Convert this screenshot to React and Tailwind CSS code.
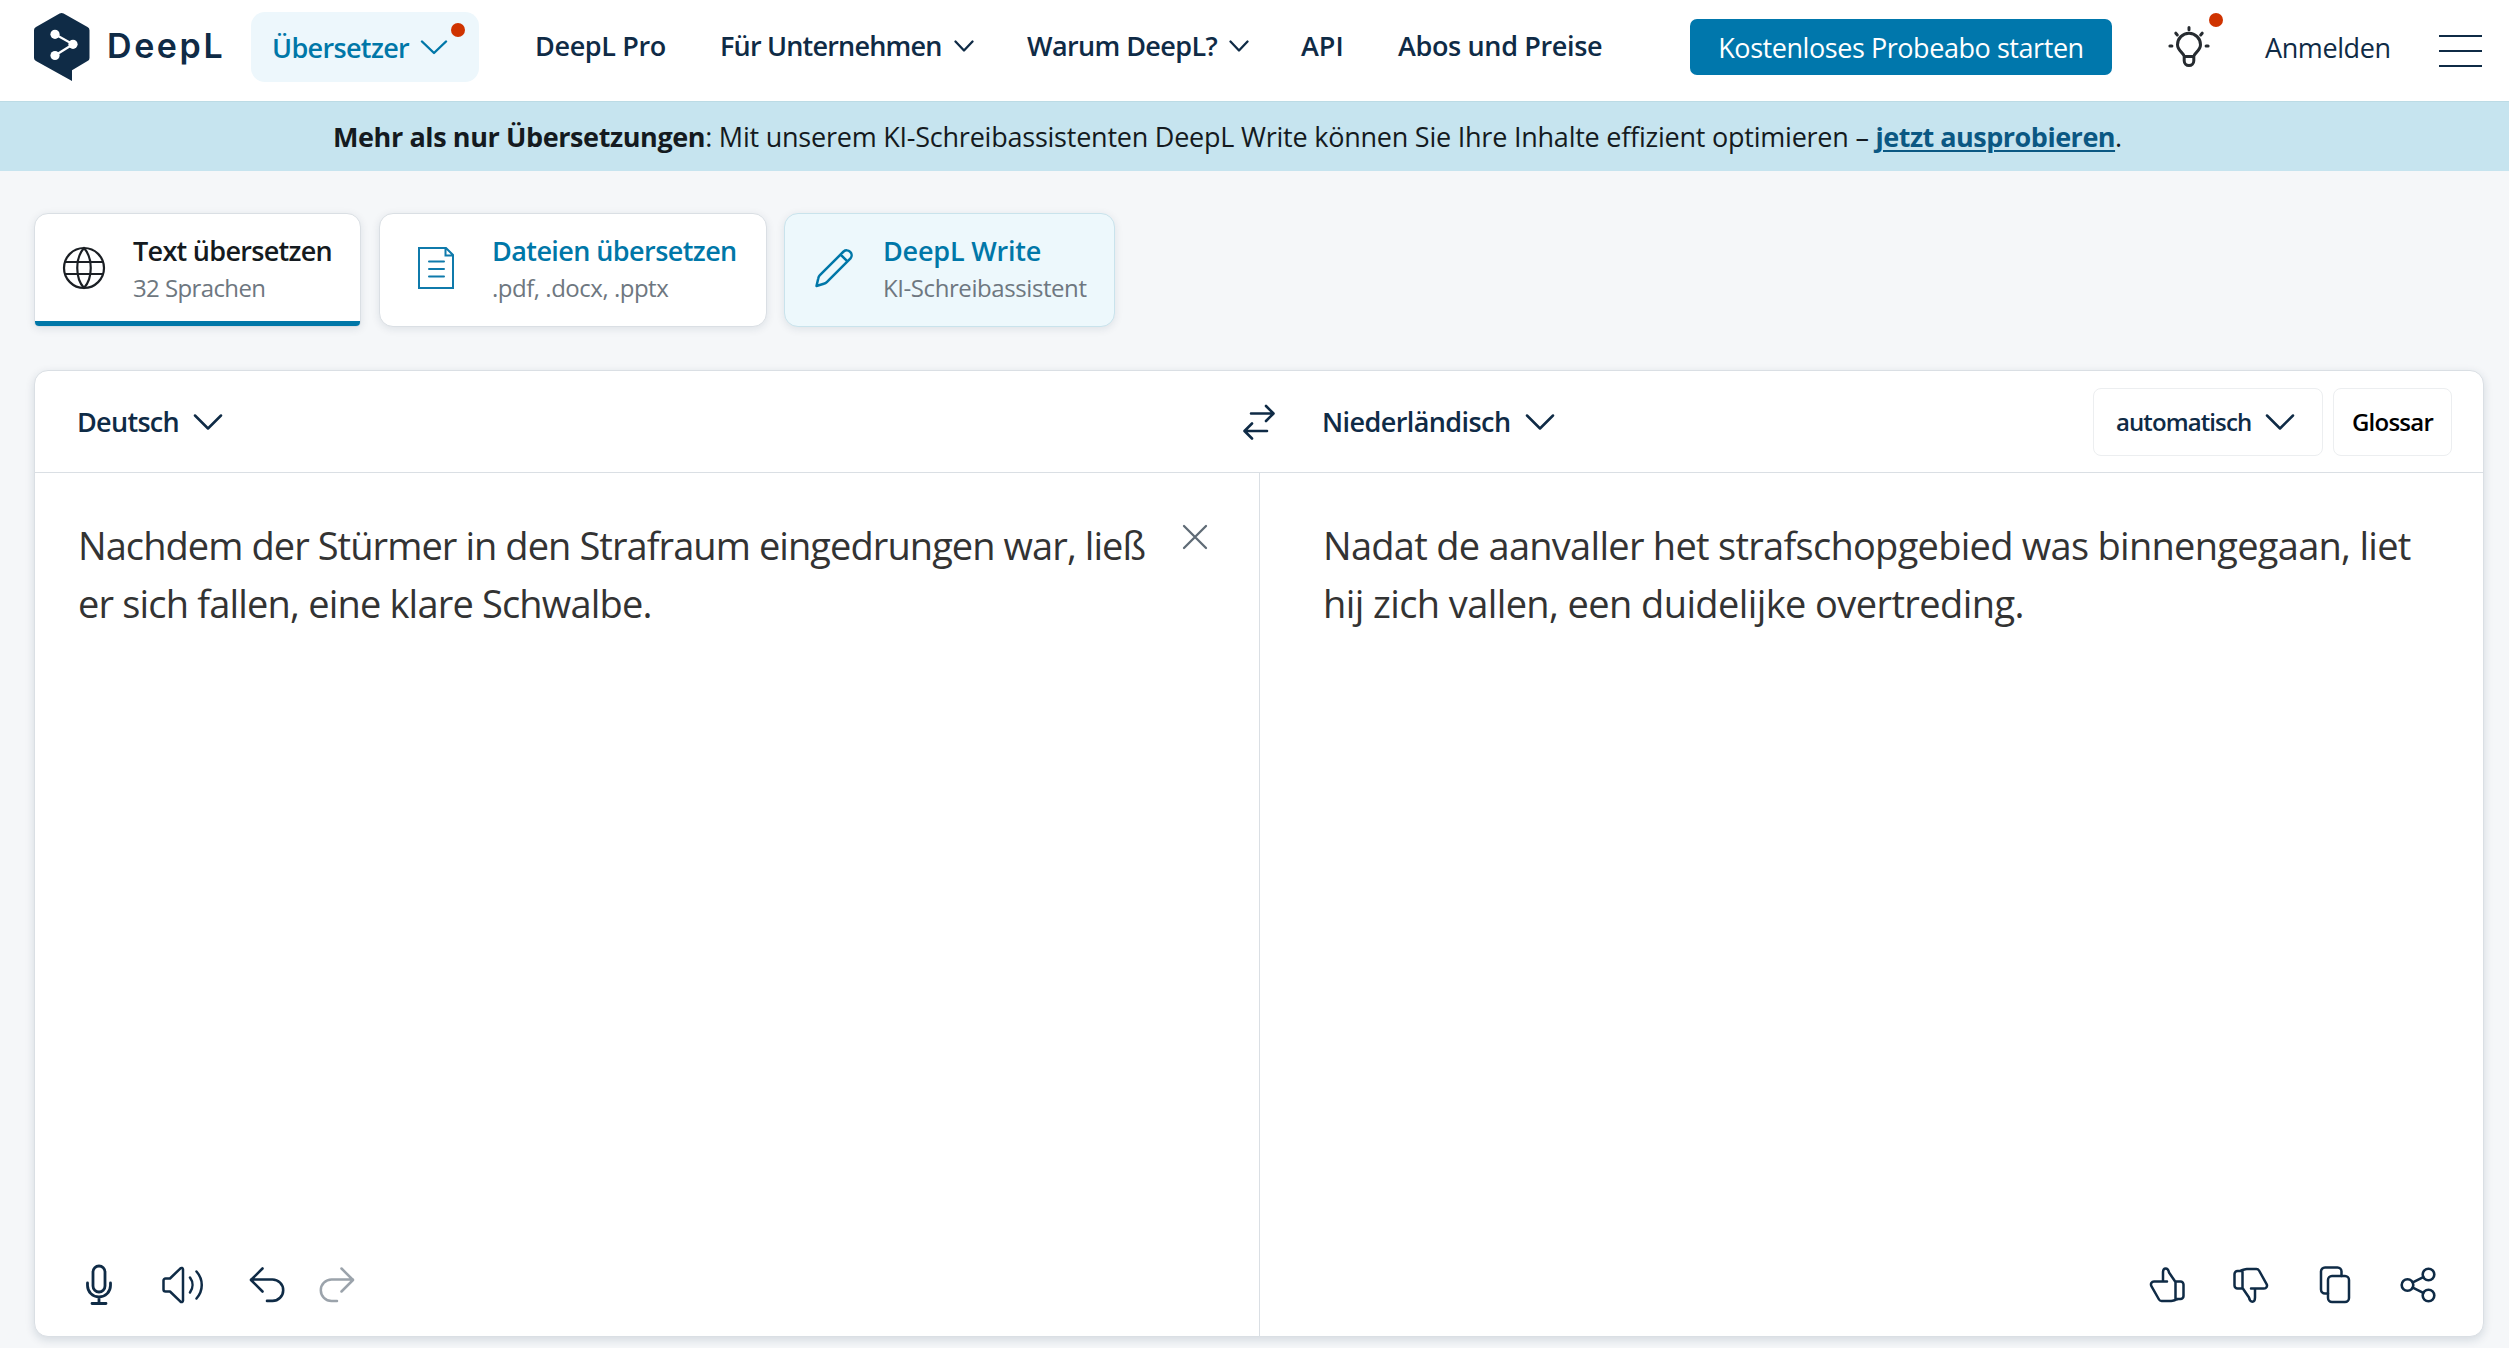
function Icon({ className, viewBox, width = 2, children }) {
  return (
    <svg
      className={`shrink-0 ${className}`}
      viewBox={viewBox}
      fill="none"
      stroke="currentColor"
      strokeWidth={width}
      strokeLinecap="round"
      strokeLinejoin="round"
    >
      {children}
    </svg>
  );
}

function Chevron({ className }) {
  return (
    <Icon className={`h-4 w-[30px] ${className}`} viewBox="0 0 30 16" width={2.5}>
      <path d="M2 1.5l13 13L28 1.5" />
    </Icon>
  );
}

function SmallChevron({ className }) {
  return (
    <Icon className={`h-3 w-5 ${className}`} viewBox="0 0 20 12" width={2.3}>
      <path d="M1.5 1.5L10 10.500l8.500-9" />
    </Icon>
  );
}

function Logo() {
  return (
    <div className="flex items-center ml-[34px] w-[217px] h-[68px] text-[#0f2b46]">
      <svg className="w-[56px] h-[68px] shrink-0" viewBox="0 0 56 68">
        <path
          fill="currentColor"
          d="M25.6 .6a4 4 0 0 1 4 0L53.5 14a3.6 3.6 0 0 1 2 3.3v27.5a3.6 3.6 0 0 1-2 3.3L38 57.2V68L2 48.1a3.6 3.6 0 0 1-2-3.3V17.3A3.6 3.6 0 0 1 2 14z"
        />
        <path d="M21 21.3l18 10-18 11.2" fill="none" stroke="#fff" strokeWidth="2.2" />
        <circle cx="21" cy="21.3" r="4.6" fill="#fff" />
        <circle cx="39" cy="31.3" r="4.6" fill="#fff" />
        <circle cx="21" cy="42.5" r="4.6" fill="#fff" />
      </svg>
      <span className="ml-[17px] -mt-[3px] font-['Inter','Open_Sans',sans-serif] text-[34px] leading-none font-semibold tracking-[2.6px]">
        DeepL
      </span>
    </div>
  );
}

function Header() {
  return (
    <header className="flex items-start h-[101px] bg-white pt-[13px] whitespace-nowrap text-[27px] leading-[66px] text-[#0f2b46] font-semibold">
      <Logo />
      <div className="relative -mt-px flex items-center w-[228px] h-[70px] rounded-[14px] bg-[#edf7fc] pl-[21px] text-[#0077a8]">
        <span className="w-[148px] pt-[2px] tracking-[-0.65px]">Übersetzer</span>
        <Icon className="h-[15px] w-[28px]" viewBox="0 0 28 15" width={2.4}>
          <path d="M2 1.5l12 11.5L26 1.5" />
        </Icon>
        <span className="absolute right-[14px] top-[11px] size-[14px] rounded-full bg-[#cf3300]"></span>
      </div>

      <nav className="flex">
        <a className="ml-[56px] w-[185px] tracking-[-0.35px]">DeepL Pro</a>
        <a className="flex items-center w-[307px]">
          <span className="w-[234px] tracking-[-0.8px]">Für Unternehmen</span>
          <SmallChevron />
        </a>
        <a className="flex items-center w-[274px]">
          <span className="w-[202px] tracking-[-0.6px]">Warum DeepL?</span>
          <SmallChevron />
        </a>
        <a className="w-[97px]">API</a>
        <a className="w-[292px] tracking-[-0.35px]">Abos und Preise</a>
      </nav>

      <button className="mt-[6px] h-[56px] w-[422px] shrink-0 rounded-[7px] bg-[#0077ac] text-center leading-[58px] font-normal tracking-[-0.44px] text-white">
        Kostenloses Probeabo starten
      </button>

      <div className="relative ml-[55px] mt-[11px] size-[44px] shrink-0 text-[#262b30]">
        <Icon className="size-[44px]" viewBox="0 0 44 44" width={3}>
          <path d="M17.2 32.2v4.6a4.8 4.8 0 0 0 9.6 0v-4.6M17.2 32.6c0-3.6-6.7-5.6-6.7-11.8a11.5 11.5 0 0 1 23 0c0 6.2-6.7 8.2-6.7 11.8z" />
          <path d="M22 3.6v2.2M8.8 9.2l1.500 1.800M35.200 9.200l-1.500 1.800M2.900 22h2M39.100 22h2" />
        </Icon>
        <span className="absolute -top-[11px] left-[42px] size-[14px] rounded-full bg-[#cf3300]"></span>
      </div>

      <a className="ml-[54px] mt-[2px] w-[174px] font-normal tracking-[-0.4px]">Anmelden</a>
      <div className="mt-[22px] flex w-[43px] flex-col gap-[13px]">
        <span className="h-[2px] bg-[#0f2b46]"></span>
        <span className="h-[2px] bg-[#0f2b46]"></span>
        <span className="h-[2px] bg-[#0f2b46]"></span>
      </div>
    </header>
  );
}

function Banner() {
  return (
    <div className="h-[70px] border-t border-[#bcdbe5] bg-[#c6e4ef] pl-[333px] text-[27px] leading-[69px] whitespace-nowrap text-[#141a20]">
      <b className="tracking-[-0.4px]">Mehr als nur Übersetzungen</b>
      <span className="tracking-[-0.23px]">
        : Mit unserem KI-Schreibassistenten DeepL Write können Sie Ihre Inhalte effizient optimieren –{" "}
      </span>
      <a className="font-bold tracking-[-0.5px] text-[#0b5883] underline decoration-2 underline-offset-[3px]">
        jetzt ausprobieren
      </a>
      .
    </div>
  );
}

const cardShadow = "border border-[#dadfe4] shadow-[0_2px_8px_rgba(15,43,70,0.10)]";

function Tabs() {
  return (
    <div className="flex mt-[42px] ml-[34px] whitespace-nowrap">
      <div className={`relative flex items-center w-[327px] h-[114px] overflow-hidden rounded-t-[14px] rounded-b-[5px] bg-white pl-[27px] ${cardShadow}`}>
        <Icon className="-mt-[5px] size-[44px] text-[#1b1f24]" viewBox="0 0 44 44" width={2.2}>
          <circle cx="22" cy="22" r="20" />
          <path d="M3 16h38M3 28h38M22 2c-9 10-9 30 0 40M22 2c9 10 9 30 0 40" />
        </Icon>
        <div className="ml-[27px] -mt-[2px] leading-[37px]">
          <div className="text-[27px] font-semibold tracking-[-0.7px] text-[#141a20]">Text übersetzen</div>
          <div className="text-[24px] tracking-[-0.6px] text-[#6e7780]">32 Sprachen</div>
        </div>
        <span className="absolute inset-x-0 bottom-0 h-[5px] bg-[#0077a8]"></span>
      </div>

      <div className={`flex items-center ml-[18px] w-[388px] h-[114px] rounded-[14px] bg-white pl-[37px] ${cardShadow}`}>
        <Icon className="-mt-[5px] h-[44px] w-[38px] text-[#0f7aab]" viewBox="0 0 38 44" width={2}>
          <path d="M2 2h27l7 7v33H2zM28.500 2v7.500H36M12 15.500h15M12 23h15M12 30.500h15" strokeLinejoin="miter" />
        </Icon>
        <div className="ml-[37px] -mt-[2px] leading-[37px]">
          <div className="text-[27px] font-semibold tracking-[-0.58px] text-[#0077a8]">Dateien übersetzen</div>
          <div className="text-[24px] tracking-[-0.48px] text-[#6e7780]">.pdf, .docx, .pptx</div>
        </div>
      </div>

      <div className="flex items-center ml-[17px] w-[331px] h-[114px] rounded-[14px] border border-[#c9e3ec] bg-[#edf8fc] pl-[29px] shadow-[0_2px_8px_rgba(15,43,70,0.10)]">
        <Icon className="-mt-[5px] size-[40px] text-[#0077a8]" viewBox="0 0 40 40" width={2.5}>
          <path d="M2.500 38l1.800-7.800a6 6 0 0 1 1.600-3L29.600 3.500a4.900 4.900 0 0 1 6.900 6.900L12.800 34.100a6 6 0 0 1-3 1.700zM26.600 6.600l6.800 6.800" />
        </Icon>
        <div className="ml-[29px] -mt-[2px] leading-[37px]">
          <div className="text-[27px] font-semibold tracking-[-0.2px] text-[#0077a8]">DeepL Write</div>
          <div className="text-[24px] tracking-[-0.42px] text-[#6e7780]">KI-Schreibassistent</div>
        </div>
      </div>
    </div>
  );
}

function LanguageBar() {
  return (
    <div className="flex items-center h-[102px] border-b border-[#dadfe4] whitespace-nowrap text-[27px] font-semibold text-[#0f2b46]">
      <div className="flex items-center w-[1165px] pl-[42px]">
        <span className="w-[116px] pt-[2px] tracking-[-0.7px]">Deutsch</span>
        <Chevron />
      </div>
      <Icon className="ml-[42px] h-[36px] w-[34px]" viewBox="0 0 34 36" width={2.6}>
        <path d="M9 9.500h22M24 2l7.500 7.500L24 17M25 27H3M10 19.500L2.500 27l7.500 7.500" />
      </Icon>
      <div className="flex items-center ml-[46px] w-[771px]">
        <span className="w-[203px] pt-[2px] tracking-[-0.58px]">Niederländisch</span>
        <Chevron />
      </div>
      <button className="flex items-center h-[68px] w-[230px] rounded-[8px] border border-[#eceef0] pl-[22px] text-[24px] tracking-[-0.9px]">
        <span className="w-[149px] text-left">automatisch</span>
        <Chevron />
      </button>
      <button className="ml-[10px] h-[68px] w-[119px] rounded-[8px] border border-[#eceef0] text-[24px] tracking-[-0.75px] text-black">
        Glossar
      </button>
    </div>
  );
}

function SourceTools() {
  return (
    <div className="flex items-center h-[44px] text-[#0f2b46]">
      <Icon className="ml-[50px] h-[42px] w-[28px]" viewBox="0 0 28 42" width={2.8}>
        <rect x="8" y="2" width="12" height="26" rx="6" />
        <path d="M2.500 19v2.500a11.500 11.500 0 0 0 23 0V19M14 33v6M7 39.500h14" />
      </Icon>
      <Icon className="ml-[48px] h-[38px] w-[44px]" viewBox="0 0 44 38" width={2.5}>
        <path d="M4.500 12.500H9L19.500 2.300a1.500 1.500 0 0 1 2.500 1v31.400a1.500 1.500 0 0 1-2.500 1L9 25.500H4.500a2 2 0 0 1-2-2v-9a2 2 0 0 1 2-2z" />
        <path d="M29 11.500c3.300 4.500 3.300 10.500 0 15M35.500 5.500c7 8 7 19 0 27" />
      </Icon>
      <Icon className="ml-[44px] size-[36px]" viewBox="0 0 36 36" width={2.6}>
        <path d="M13.500 1.500L2 13l11.500 11.500M2 12.500h21.500a10.700 10.700 0 0 1 0 21.400H18" />
      </Icon>
      <Icon className="ml-[34px] size-[36px] text-[#9ba3ab]" viewBox="0 0 36 36" width={2.5}>
        <path d="M22.500 1.500L34 13 22.500 24.500M34 12.500H12.500a10.700 10.700 0 0 0 0 21.400H18" />
      </Icon>
    </div>
  );
}

const thumb =
  "M18 14.500H5a3 3 0 0 0-2.600 4.500l7.600 13.500a3 3 0 0 0 2.600 1.500h9.500c2 0 3.200-.8 6.400-1.600M14 14.500V5.500c0-5.500 5-5.500 6 0l6.500 9.500M26.500 14.500h5a3 3 0 0 1 3 3V29a3 3 0 0 1-3 3h-5z";

function TargetTools() {
  return (
    <div className="flex items-center justify-end h-[44px] pr-[47px] text-[#0f2b46]">
      <Icon className="size-[36px]" viewBox="0 0 36 36" width={2.5}>
        <path d={thumb} />
      </Icon>
      <Icon className="ml-[48px] size-[36px] rotate-180" viewBox="0 0 36 36" width={2.5}>
        <path d={thumb} />
      </Icon>
      <Icon className="ml-[50px] h-[38px] w-[32px]" viewBox="0 0 32 38" width={2.5}>
        <path d="M9 27.500H6a4 4 0 0 1-4-4V5.500a4 4 0 0 1 4-4h12.500a4 4 0 0 1 4 4V10" />
        <rect x="9" y="10" width="21" height="26" rx="4" />
      </Icon>
      <Icon className="ml-[49px] size-[36px]" viewBox="0 0 36 36" width={2.6}>
        <circle cx="7.500" cy="18" r="5.800" />
        <circle cx="28.500" cy="7.500" r="5.800" />
        <circle cx="28.500" cy="28.500" r="5.800" />
        <path d="M12.800 15.400l10.500-5.200M12.800 20.600l10.500 5.200" />
      </Icon>
    </div>
  );
}

export default function App() {
  return (
    <div className="flex flex-col w-[2509px] h-[1348px] overflow-hidden bg-[#f5f7f9] font-['Open_Sans','Noto_Sans',sans-serif]">
      <Header />
      <Banner />
      <Tabs />

      <main className="mt-[43px] ml-[34px] flex flex-col w-[2450px] h-[967px] rounded-[14px] bg-white border border-[#dadfe4] shadow-[0_3px_10px_rgba(15,43,70,0.14)]">
        <LanguageBar />
        <div className="flex grow whitespace-nowrap text-[38px] leading-[58px] text-[#333333]">
          <section className="flex flex-col justify-between w-[1225px] pt-[43px] pb-[29px] border-r border-[#dadfe4]">
            <div className="flex">
              <div className="ml-[43px] w-[1104px]">
                <p className="tracking-[-0.93px]">Nachdem der Stürmer in den Strafraum eingedrungen war, ließ</p>
                <p className="tracking-[-0.82px]">er sich fallen, eine klare Schwalbe.</p>
              </div>
              <Icon className="mt-[8px] size-[26px] text-[#5f6b76]" viewBox="0 0 26 26" width={2.3}>
                <path d="M2 2l22 22M24 2L2 24" />
              </Icon>
            </div>
            <SourceTools />
          </section>
          <section className="flex flex-col justify-between grow pt-[43px] pb-[29px]">
            <div className="ml-[63px]">
              <p className="tracking-[-0.72px]">Nadat de aanvaller het strafschopgebied was binnengegaan, liet</p>
              <p className="tracking-[-0.6px]">hij zich vallen, een duidelijke overtreding.</p>
            </div>
            <TargetTools />
          </section>
        </div>
      </main>
    </div>
  );
}
